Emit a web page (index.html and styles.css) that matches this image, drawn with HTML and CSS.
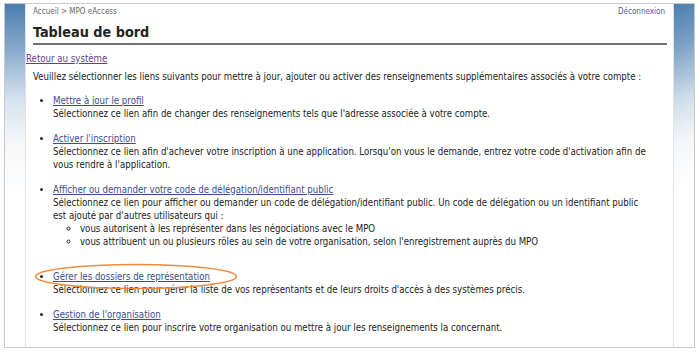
FILE: index.html
```html
<!DOCTYPE html>
<html lang="fr">
<head>
    <meta charset="UTF-8">
    <title>Tableau de bord - MPO eAccess</title>
    <link rel="stylesheet" href="styles.css">
</head>
<body>
    <div class="frame">
        <div class="band band-left"></div>
        <div class="page">
            <div class="topbar">
                <span class="crumbs">Accueil &gt; MPO eAccess</span>
                <a href="#" class="logout">Déconnexion</a>
            </div>
            <h1>Tableau de bord</h1>
            <a href="#" class="back">Retour au système</a>
            <p class="intro">Veuillez sélectionner les liens suivants pour mettre à jour, ajouter ou activer des renseignements supplémentaires associés à votre compte :</p>
            <ul class="links">
                <li>
                    <a href="#">Mettre à jour le profil</a><br>
                    Sélectionnez ce lien afin de changer des renseignements tels que l'adresse associée à votre compte.
                </li>
                <li>
                    <a href="#">Activer l'inscription</a><br>
                    Sélectionnez ce lien afin d'achever votre inscription à une application. Lorsqu'on vous le demande, entrez votre code d'activation afin de vous rendre à l'application.
                </li>
                <li class="with-sub">
                    <a href="#">Afficher ou demander votre code de délégation/identifiant public</a><br>
                    Sélectionnez ce lien pour afficher ou demander un code de délégation/identifiant public. Un code de délégation ou un identifiant public<br>
                    est ajouté par d'autres utilisateurs qui :
                    <ul>
                        <li>vous autorisent à les représenter dans les négociations avec le MPO</li>
                        <li>vous attribuent un ou plusieurs rôles au sein de votre organisation, selon l'enregistrement auprès du MPO</li>
                    </ul>
                </li>
                <li class="marked">
                    <svg class="circle" width="204" height="27" viewBox="0 0 204 27">
                        <ellipse cx="102" cy="13.5" rx="100.5" ry="12" fill="none" stroke="#ee8a3c" stroke-width="1.5"/>
                    </svg>
                    <a href="#">Gérer les dossiers de représentation</a><br>
                    Sélectionnez ce lien pour gérer la liste de vos représentants et de leurs droits d'accès à des systèmes précis.
                </li>
                <li>
                    <a href="#">Gestion de l'organisation</a><br>
                    Sélectionnez ce lien pour inscrire votre organisation ou mettre à jour les renseignements la concernant.
                </li>
            </ul>
        </div>
        <div class="band band-right"></div>
    </div>
</body>
</html>
```

FILE: styles.css
```css
body { margin: 0; background: #fff; font-family: "DejaVu Sans Condensed", "DejaVu Sans", sans-serif; font-size: 9.6px; color: #222; }
a { color: #3b4d8c; }
.frame { display: flex; margin: 3px 5px 0 4px; height: 343px; border: 1px solid #c9c9c9; }
.band { width: 20px; flex: none; }
.band-left { background: linear-gradient(to bottom, #4a7fb0 0, #86a9cc 45px, #d5e2ee 95px, #f5f8fb 140px, #fff 200px); border-right: 1px solid #e2e2e2; }
.band-right { background: linear-gradient(160deg, #4a7fb0 0, #7aa0c5 40px, #cbdbe9 90px, #f2f6fa 130px, #fff 180px); border-left: 1px solid #e2e2e2; }
.page { flex: 1; position: relative; }
.topbar { display: flex; justify-content: space-between; padding: 3px 8px 0 7px; font-size: 8px; line-height: 10px; color: #666; }
.logout { text-decoration: none; color: #50608f; }
h1 { margin: 6px 6px 0 7px; padding-bottom: 2px; font-size: 14.3px; line-height: 18px; color: #222; border-bottom: 2px solid #707070; }
.back { display: inline-block; margin-top: 8px; color: #6a3c8c; line-height: 12px; }
.intro { margin: 6px 0 0 7px; line-height: 12.5px; }
.links { margin: 10px 0 0 0; padding: 0 8px 0 27px; line-height: 13px; }
.links > li { margin-bottom: 12px; }
.links > li.with-sub { margin-bottom: 22px; }
.links ul { margin: 0; padding-left: 27px; list-style: circle; }
.marked { position: relative; }
.circle { position: absolute; left: -19px; top: -7px; }
```
